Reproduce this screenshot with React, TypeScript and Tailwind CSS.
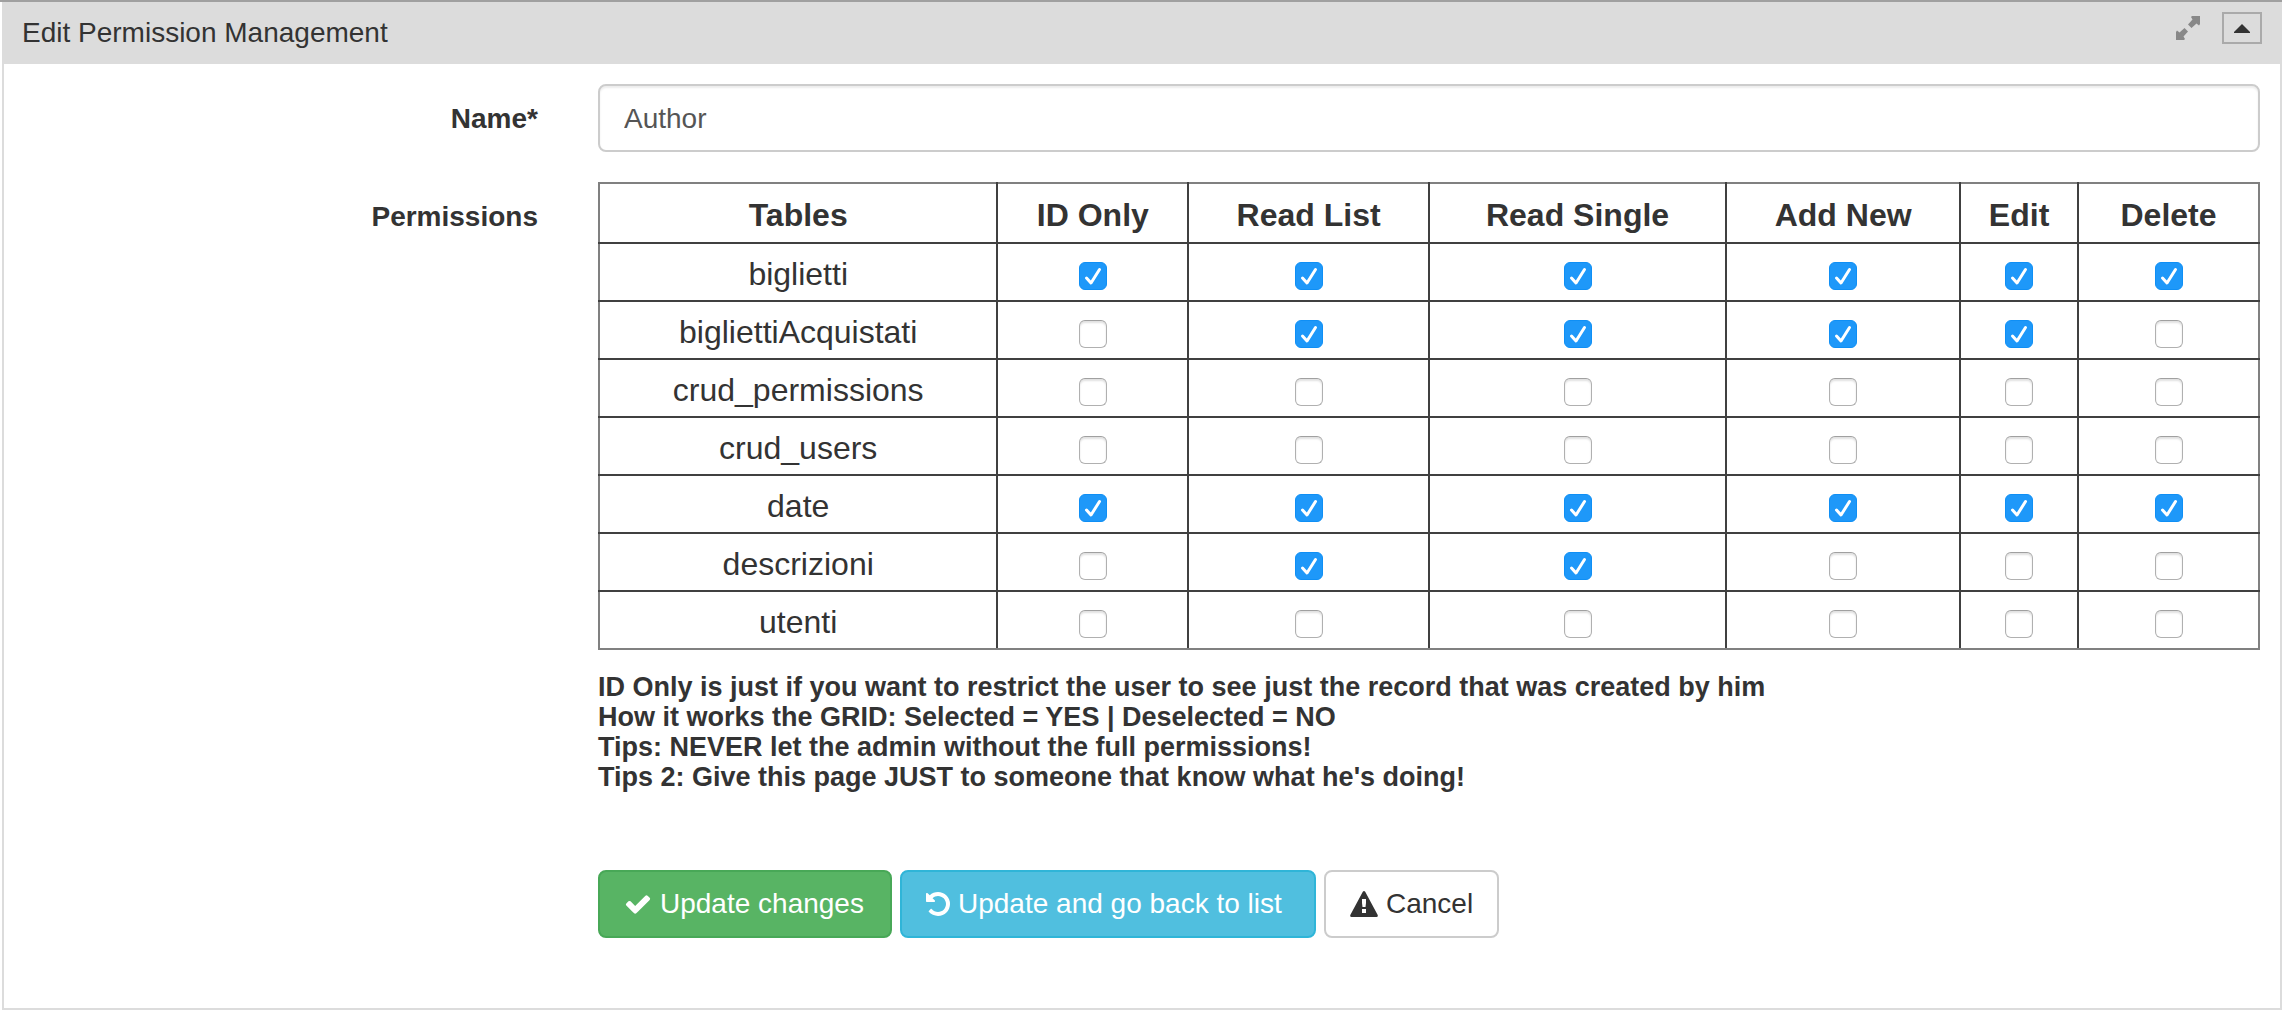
import { useState, type ReactNode } from "react";

const COLUMNS = ["ID Only", "Read List", "Read Single", "Add New", "Edit", "Delete"];

const ROWS: { table: string; granted: boolean[] }[] = [
  { table: "biglietti", granted: [true, true, true, true, true, true] },
  { table: "bigliettiAcquistati", granted: [false, true, true, true, true, false] },
  { table: "crud_permissions", granted: [false, false, false, false, false, false] },
  { table: "crud_users", granted: [false, false, false, false, false, false] },
  { table: "date", granted: [true, true, true, true, true, true] },
  { table: "descrizioni", granted: [false, true, true, false, false, false] },
  { table: "utenti", granted: [false, false, false, false, false, false] },
];

function ExpandIcon() {
  return (
    <svg width="24" height="24" viewBox="0 0 24 24" fill="currentColor" aria-hidden="true">
      <path d="M15 1L16 0H24V8L23 9.500L20.500 7.500L15.500 12L12 8.500L16.500 3.500Z" />
      <path d="M9 23L8 24H0V16L1 14.500L3.500 16.500L8.500 12L12 15.500L7.500 20.500Z" />
    </svg>
  );
}

function CheckIcon() {
  return (
    <svg width="28" height="28" viewBox="0 0 1792 1792" fill="currentColor" aria-hidden="true">
      <path d="M1671 566q0 40-28 68l-724 724-136 136q-28 28-68 28t-68-28l-136-136-362-362q-28-28-28-68t28-68l136-136q28-28 68-28t68 28l294 295 656-657q28-28 68-28t68 28l136 136q28 28 28 68z" />
    </svg>
  );
}

function UndoIcon() {
  return (
    <svg width="24" height="24" viewBox="0 128 1536 1536" fill="currentColor" aria-hidden="true">
      <path d="M1536 896q0 156-61 298t-164 245-245 164-298 61q-172 0-327-72.500t-264-204.500q-7-10-6.500-22.500t8.500-20.500l137-138q10-9 25-9 16 2 23 12 73 95 179 147t225 52q104 0 198.500-40.500t163.500-109.500 109.500-163.500 40.500-198.500-40.500-198.500-109.500-163.500-163.500-109.500-198.500-40.500q-98 0-188 35.500t-160 101.500l137 138q31 30 14 69-17 40-59 40h-448q-26 0-45-19t-19-45v-448q0-42 40-59 39-17 69 14l130 129q107-101 244.500-156.500t284.500-55.500q156 0 298 61t245 164 164 245 61 298z" />
    </svg>
  );
}

function WarningIcon() {
  return (
    <svg width="28" height="26" viewBox="0 0 28 26" aria-hidden="true">
      <path
        fillRule="evenodd"
        fill="currentColor"
        d="M12.800 0.700Q14 -0.700 15.200 0.700L27.700 24Q28.200 26 26.500 26H1.500Q-0.200 26 0.300 24ZM12 8V12L12.500 16H15.500L16 12V8ZM12 18V22H16V18Z"
      />
    </svg>
  );
}

function Tick({ label, initial }: { label: string; initial: boolean }) {
  const [on, setOn] = useState(initial);
  return (
    <span className="mt-2 inline-grid align-top">
      <input
        type="checkbox"
        aria-label={label}
        checked={on}
        onChange={() => setOn(!on)}
        className="col-start-1 row-start-1 size-7 appearance-none rounded-md border border-[#b0b0b0] border-t-[#a0a0a0] bg-white shadow-[inset_0_2px_2px_rgba(0,0,0,0.12)] checked:border-[#0f8ff5] checked:bg-[#1e98f9] checked:shadow-none"
      />
      {on && (
        <svg viewBox="0 0 28 28" fill="none" className="pointer-events-none col-start-1 row-start-1 size-7" aria-hidden="true">
          <path d="M7.500 16L12 21L20.500 7.500" stroke="white" strokeWidth="3" strokeLinecap="round" strokeLinejoin="round" />
        </svg>
      )}
    </span>
  );
}

function FormRow({ label, children }: { label: ReactNode; children: ReactNode }) {
  return (
    <div className="-mx-2.5 grid grid-cols-[25%_75%]">
      <div className="px-[30px] text-right font-bold leading-10">{label}</div>
      <div className="px-[30px]">{children}</div>
    </div>
  );
}

const BUTTON = "flex h-[68px] items-center gap-2 rounded-lg border-2 px-6";

export default function App() {
  const [name, setName] = useState("Author");
  const [open, setOpen] = useState(true);
  return (
    <main className="border-t-2 border-[#a0a0a0] bg-white pl-0.5 font-['Liberation_Sans',Arial,sans-serif] text-[28px] leading-10 text-[#333]">
      <header className="flex h-[62px] items-start justify-between bg-[#dcdcdc] px-5">
        <h1 className="mt-[11px]">Edit Permission Management</h1>
        <div className="flex items-start gap-[22px]">
          <button type="button" aria-label="Expand" className="mt-3.5 text-[#888]">
            <ExpandIcon />
          </button>
          <button
            type="button"
            aria-label="Collapse"
            onClick={() => setOpen(!open)}
            className="mt-2.5 flex h-8 w-10 items-center justify-center border-2 border-[#aaa]"
          >
            <svg width="16" height="9" viewBox="0 0 16 9" fill="#333" aria-hidden="true">
              <path d="M8 0L16 8V9H0V8Z" />
            </svg>
          </button>
        </div>
      </header>
      {open && (
        <form className="border-x-2 border-b-2 border-[#dcdcdc] pt-5 pb-[70px]" onSubmit={(e) => e.preventDefault()}>
          <FormRow label={<label htmlFor="name" className="block pt-[15px]">Name*</label>}>
            <input
              id="name"
              value={name}
              onChange={(e) => setName(e.target.value)}
              className="block h-[68px] w-full rounded-lg border-2 border-[#ccc] px-6 pt-0.5 text-[#555] shadow-[inset_0_2px_2px_rgba(0,0,0,0.075)]"
            />
          </FormRow>
          <div className="mt-[30px]">
            <FormRow label={<span className="block pt-[15px]">Permissions</span>}>
              <table className="w-full table-fixed border-collapse text-center text-[32px] leading-[46px]">
                <colgroup>
                  <col className="w-[24%]" />
                  <col className="w-[11.5%]" />
                  <col className="w-[14.5%]" />
                  <col className="w-[17.9%]" />
                  <col className="w-[14.1%]" />
                  <col className="w-[7.1%]" />
                  <col className="w-[10.9%]" />
                </colgroup>
                <thead>
                  <tr className="h-[60px]">
                    {["Tables", ...COLUMNS].map((c) => (
                      <th
                        key={c}
                        scope="col"
                        className="border-2 border-[#404040] border-t-[#808080] p-0 pt-1 font-bold first:border-l-[#808080] last:border-r-[#808080]"
                      >
                        {c}
                      </th>
                    ))}
                  </tr>
                </thead>
                <tbody>
                  {ROWS.map((r) => (
                    <tr key={r.table} className="group h-[58px]">
                      <th
                        scope="row"
                        className="border-2 border-[#404040] border-l-[#808080] p-0 pt-1 font-normal group-last:border-b-[#808080]"
                      >
                        {r.table}
                      </th>
                      {r.granted.map((g, i) => (
                        <td
                          key={COLUMNS[i]}
                          className="border-2 border-[#404040] p-0 leading-none last:border-r-[#808080] group-last:border-b-[#808080]"
                        >
                          <Tick label={`${r.table}: ${COLUMNS[i]}`} initial={g} />
                        </td>
                      ))}
                    </tr>
                  ))}
                </tbody>
              </table>
              <div className="mt-[22px] text-[27px] font-bold leading-[30px]">
                <p>ID Only is just if you want to restrict the user to see just the record that was created by him</p>
                <p>How it works the GRID: Selected = YES | Deselected = NO</p>
                <p>Tips: NEVER let the admin without the full permissions!</p>
                <p>Tips 2: Give this page JUST to someone that know what he's doing!</p>
              </div>
              <div className="mt-[78px] flex gap-2">
                <button type="submit" className={`${BUTTON} min-w-[294px] border-[#48a857] bg-[#58b464] text-white`}>
                  <CheckIcon />
                  Update changes
                </button>
                <button type="button" className={`${BUTTON} min-w-[416px] border-[#2fb5d8] bg-[#50bfdf] text-white`}>
                  <UndoIcon />
                  Update and go back to list
                </button>
                <button type="button" className={`${BUTTON} border-[#ccc] bg-white text-[#333]`}>
                  <WarningIcon />
                  Cancel
                </button>
              </div>
            </FormRow>
          </div>
        </form>
      )}
    </main>
  );
}
